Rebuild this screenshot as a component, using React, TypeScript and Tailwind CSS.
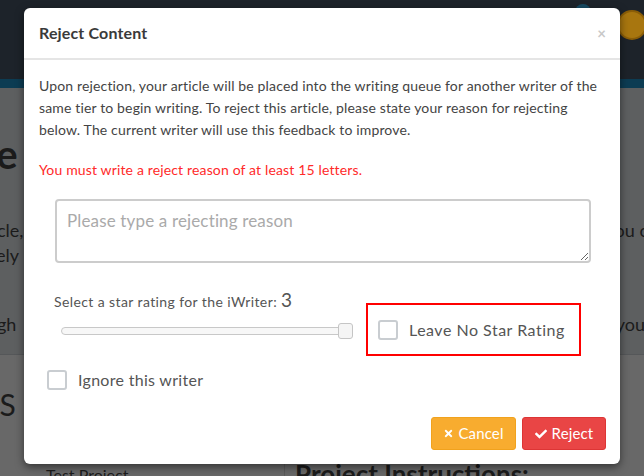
import { FaTimes, FaCheck } from 'react-icons/fa'

const font = { fontFamily: 'Lato, "Open Sans", sans-serif' }

function Checkbox() {
  return <span className="inline-block w-5 h-5 rounded-[3px] border-2 border-[#c9cdd1] bg-white shrink-0" />
}

function PageBehind() {
  return (
    <div className="w-[644px] h-[476px] overflow-hidden bg-[#5d5f60] text-[#1b1b1b]" style={font}>
      {/* top nav */}
      <div className="h-[79px] bg-[#1d232a] flex justify-end items-start">
        <span className="mt-[4px] mr-[26px] w-4 h-4 rounded-full bg-[#164a63]" />
        <span className="mt-[10px] -mr-[3px] w-[30px] h-[30px] rounded-full bg-[#a8760f] border-2 border-[#8a5d07]" />
      </div>
      <div className="h-[9px] bg-[#0c3c53]" />

      {/* hero */}
      <div className="h-[267px] border-b border-[#555759]">
        <div className="pt-[46px] text-[40px] font-bold leading-none -ml-[18px]">re</div>
        <div className="mt-[44px] flex justify-between text-[18px] leading-[25px]">
          <span className="-ml-[3px]">cle,</span>
          <span className="-mr-[4px]">ou c</span>
        </div>
        <div className="flex justify-between text-[18px] leading-[25px]">
          <span className="-ml-[4px]">ely</span>
          <span />
        </div>
        <div className="mt-[44px] flex justify-between text-[18px] leading-[25px]">
          <span className="-ml-[3px]">gh</span>
          <span className="-mr-[1px]">you</span>
        </div>
      </div>

      {/* lower section */}
      <div className="bg-[#686868] h-[200px] flex">
        <div className="w-[285px] border-r border-[#5a5a5a] flex flex-col">
          <div className="mt-[34px] -ml-[16px] text-[30px] leading-none">LS</div>
          <div className="mt-[44px] ml-[46px] text-[16px]">Test Project</div>
        </div>
        <div className="flex-1 pt-[100px] pl-[10px] text-[26px] font-bold">Project Instructions:</div>
      </div>
    </div>
  )
}

function Modal() {
  return (
    <div
      className="absolute left-[24px] top-[8px] w-[596px] h-[456px] bg-white rounded-[6px] shadow-[0_3px_9px_rgba(0,0,0,0.5)] text-[#555] tracking-[0.15px]"
      style={font}
    >
      <div className="h-[52px] px-[15px] flex items-center justify-between border-b-2 border-[#e5e5e5]">
        <h4 className="text-[16px] font-bold text-[#3a3a3a]">Reject Content</h4>
        <span className="text-[15px] font-bold text-[#c8c8c8] leading-none mr-[-1px]">×</span>
      </div>

      <div className="px-[15px] pt-[15px]">
        <p className="text-[14px] leading-[22px] text-[#444]">
          Upon rejection, your article will be placed into the writing queue for another writer of the
          <br />
          same tier to begin writing. To reject this article, please state your reason for rejecting
          <br />
          below. The current writer will use this feedback to improve.
        </p>
        <p className="mt-[18px] text-[14px] leading-[22px] text-[#ff2a2a]">
          You must write a reject reason of at least 15 letters.
        </p>

        <div className="mt-[18px] ml-[16px] mr-[14px]">
          <textarea
            placeholder="Please type a rejecting reason"
            className="block w-full h-[64px] border-2 border-[#cccccc] rounded-[4px] px-[10px] py-[7px] text-[17px] placeholder:text-[#aaa] outline-none resize-y"
          />
        </div>

        <div className="mt-[25px] ml-[15px] flex items-start">
          <div className="w-[300px]">
            <div className="text-[14px] leading-[24px] text-[#555] tracking-[0.4px]">
              Select a star rating for the iWriter: <span className="text-[19px]">3</span>
            </div>
            <div className="mt-[9px] ml-[7px] w-[292px] relative flex items-center h-[16px]">
              <div className="w-full h-[8px] rounded-full border border-[#c8c8c8] bg-[#f7f7f7]" />
              <div className="absolute right-0 top-0 w-[15px] h-[16px] rounded-[3px] border border-[#c5c5c5] bg-[#f5f5f5]" />
            </div>
          </div>
          <div className="ml-[12px] mt-[15px] w-[215px] h-[53px] border-2 border-[#ff0000] flex items-center pl-[10px] gap-[11px]">
            <Checkbox />
            <span className="text-[16px] text-[#555] tracking-[0.5px]">Leave No Star Rating</span>
          </div>
        </div>

        <div className="mt-[12px] ml-[8px] flex items-center gap-[11px]">
          <Checkbox />
          <span className="text-[16px] text-[#555] tracking-[0.3px]">Ignore this writer</span>
        </div>
      </div>

      <div className="absolute right-[14px] bottom-[14px] flex gap-[6px]">
        <button className="w-[85px] h-[33px] rounded-[3px] bg-[#f8ac2f] border border-[#f1a21d] text-white text-[15px] flex items-center justify-center gap-[4px]">
          <FaTimes className="w-[11px] h-[11px]" />
          Cancel
        </button>
        <button className="w-[84px] h-[33px] rounded-[3px] bg-[#e94545] border border-[#dd3535] text-white text-[15px] flex items-center justify-center gap-[5px]">
          <FaCheck className="w-[12px] h-[12px]" />
          Reject
        </button>
      </div>
    </div>
  )
}

export default function App() {
  return (
    <div className="relative w-[644px] h-[476px] overflow-hidden">
      <PageBehind />
      <Modal />
    </div>
  )
}
